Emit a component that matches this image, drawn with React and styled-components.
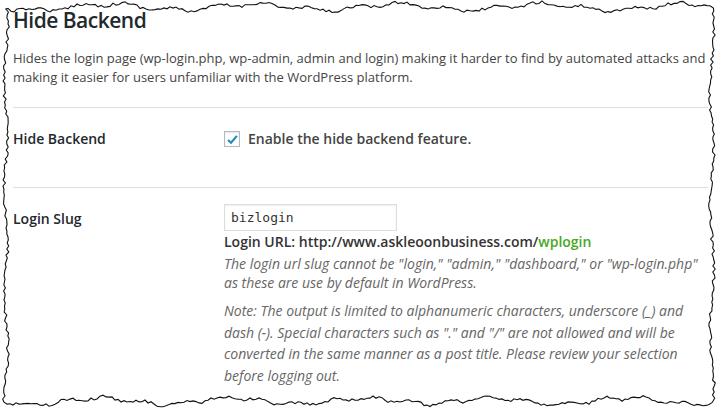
import React from 'react';
import styled, { createGlobalStyle } from 'styled-components';

const Global = createGlobalStyle`
  html, body { margin: 0; padding: 0; background: #fff; }
  body { font-family: "Open Sans", "Noto Sans", sans-serif; color: #444; }
`;

const Page = styled.div`
  position: relative;
  width: 723px;
  height: 412px;
  overflow: hidden;
  background: #fff;
`;

const Content = styled.div`
  padding: 5px 15px 0 13px;
`;

const Title = styled.h2`
  margin: 0;
  font-size: 21px;
  font-weight: 600;
  letter-spacing: -0.5px;
  line-height: 30px;
  color: #23282d;
`;

const Intro = styled.p`
  margin: 14px 0 0;
  font-size: 13px;
  line-height: 19px;
  color: #444;
`;

const Rule = styled.hr`
  margin: ${({ top }) => top || 0}px 0 0;
  border: 0;
  border-top: 1px solid #dedede;
  height: 0;
`;

const Row = styled.div`
  display: grid;
  grid-template-columns: 211px 1fr;
  align-items: start;
  min-height: ${({ h }) => h}px;
  padding-top: ${({ pt }) => pt}px;
  box-sizing: border-box;
`;

const Label = styled.div`
  font-size: 14px;
  font-weight: 600;
  line-height: 20px;
  color: #23282d;
  padding-top: ${({ pt }) => pt || 0}px;
`;

const CheckLine = styled.label`
  display: flex;
  align-items: center;
  gap: 8px;
  font-size: 14px;
  font-weight: 600;
  color: #444;
  line-height: 20px;
`;

const Box = styled.span`
  width: 14px;
  height: 14px;
  border: 1px solid #b4b9be;
  background: #fff;
  box-shadow: inset 0 1px 2px rgba(0, 0, 0, 0.1);
  display: flex;
  align-items: center;
  justify-content: center;
`;

const Input = styled.div`
  width: 173px;
  height: 27px;
  box-sizing: border-box;
  border: 1px solid #ddd;
  box-shadow: inset 0 1px 2px rgba(0, 0, 0, 0.07);
  padding: 0 6px;
  font-family: "DejaVu Sans Mono", "Liberation Mono", monospace;
  font-size: 13px;
  line-height: 25px;
  color: #333;
`;

const UrlLine = styled.div`
  margin-top: 1px;
  font-size: 14px;
  font-weight: 600;
  line-height: 20px;
  color: #333;
`;

const Slug = styled.span`
  color: #47a81f;
`;

const Hint = styled.p`
  margin: ${({ mt }) => mt}px 0 0;
  font-size: 14px;
  font-style: italic;
  line-height: ${({ lh }) => lh}px;
  color: #666;
`;

const Frame = styled.svg`
  position: absolute;
  inset: 0;
  pointer-events: none;
`;

const seeded = seed => {
  let s = seed;
  return () => {
    s = (s * 16807) % 2147483647;
    return s / 2147483647;
  };
};

const tornPath = () => {
  const r = seeded(12345);
  const pts = [];
  const jag = amp => (r() - 0.5) * amp;
  for (let x = 8; x <= 712; x += 3) {
    const y = 7 + 3 * Math.sin(x / 23) + 1.8 * Math.sin(x / 7.3) + jag(3);
    pts.push([x, y]);
  }
  for (let y = 8; y <= 402; y += 3) {
    const x = 712 + 2 * Math.sin(y / 19) + jag(3);
    pts.push([x, y]);
  }
  for (let x = 712; x >= 6; x -= 3) {
    const y = 401 + 3 * Math.sin(x / 21) + 1.8 * Math.sin(x / 6.1) + jag(3);
    pts.push([x, y]);
  }
  for (let y = 402; y >= 8; y -= 3) {
    const x = 6 + 2 * Math.sin(y / 17) + jag(3);
    pts.push([x, y]);
  }
  return 'M' + pts.map(([x, y]) => `${x.toFixed(1)},${y.toFixed(1)}`).join('L') + 'Z';
};

const TORN = tornPath();

export default function App() {
  return (
    <Page>
      <Global />
      <Content>
        <Title>Hide Backend</Title>
        <Intro>
          Hides the login page (wp-login.php, wp-admin, admin and login) making it harder to find by automated attacks and
          making it easier for users unfamiliar with the WordPress platform.
        </Intro>
        <Rule top={20} />
        <Row h={79} pt={21}>
          <Label>Hide Backend</Label>
          <CheckLine>
            <Box>
              <svg width="13" height="13" viewBox="0 0 16 16">
                <path d="M2.5 8.5 L6.2 12 L13.5 3.5" fill="none" stroke="#1e8cbe" strokeWidth="2.6" />
              </svg>
            </Box>
            Enable the hide backend feature.
          </CheckLine>
        </Row>
        <Rule />
        <Row h={220} pt={16}>
          <Label pt={5}>Login Slug</Label>
          <div>
            <Input>bizlogin</Input>
            <UrlLine>
              Login URL: http://www.askleoonbusiness.com/<Slug>wplogin</Slug>
            </UrlLine>
            <Hint mt={2} lh={19}>
              The login url slug cannot be "login," "admin," "dashboard," or "wp-login.php" as these are use by default in WordPress.
            </Hint>
            <Hint mt={8} lh={21.5}>
              Note: The output is limited to alphanumeric characters, underscore (_) and dash (-). Special characters such as "." and "/" are not allowed and will be converted in the same manner as a post title. Please review your selection before logging out.
            </Hint>
          </div>
        </Row>
      </Content>
      <Frame width="723" height="412" viewBox="0 0 723 412">
        <path d={TORN} fill="none" stroke="#111" strokeWidth="1.1" />
      </Frame>
    </Page>
  );
}
